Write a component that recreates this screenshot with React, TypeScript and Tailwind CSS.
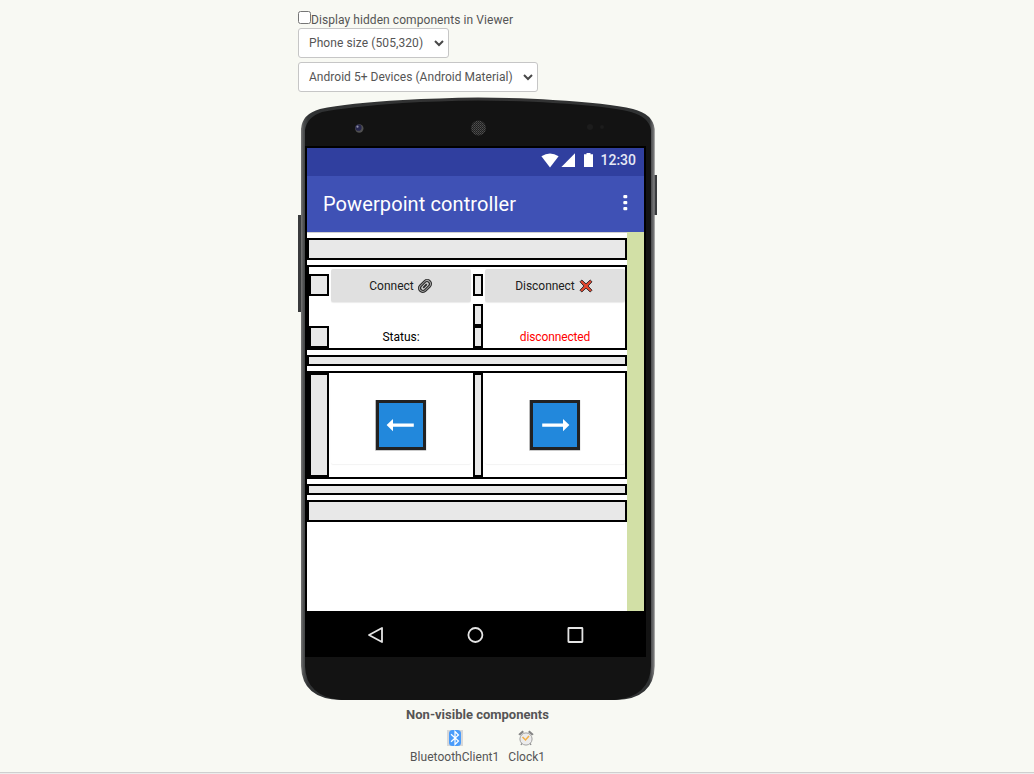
import React from "react";

const Spacer = ({ className }: { className: string }) => (
  <div className={`border-2 border-black bg-[#e8e8e8] ${className}`} />
);

const Select = ({ label, className }: { label: string; className: string }) => (
  <button className={`flex h-[30px] items-center justify-between rounded-[3px] border border-[#c6c6c6] bg-white pl-[10px] pr-[4px] text-[#555] ${className}`}>
    <span className="whitespace-nowrap">{label}</span>
    <svg width="10" height="8" viewBox="0 0 10 8" fill="none" stroke="#484848" strokeWidth="2">
      <path d="M1 2l4 4 4-4" />
    </svg>
  </button>
);

const Paperclip = () => (
  <svg width="16" height="16" viewBox="0 0 16 16" fill="none">
    <g transform="rotate(-45 8 8)">
      <rect x="0.6" y="3.7" width="14.8" height="8.6" rx="4.3" fill="#a4a4a4" stroke="#2a2a2a" strokeWidth="1.1" />
      <rect x="2.8" y="5.6" width="10.4" height="4.8" rx="2.4" fill="#d0d0d0" stroke="#2a2a2a" strokeWidth="1.1" />
      <path d="M5.5 8h5" stroke="#2a2a2a" strokeWidth="1.8" />
    </g>
  </svg>
);

const Cross = () => (
  <svg width="14" height="14" viewBox="0 0 14 14">
    <path d="M2.8 1 7 4.9 11.2 1 13 2.8 9.1 7 13 11.2 11.2 13 7 9.1 2.8 13 1 11.2 4.9 7 1 2.8Z" fill="#e0482f" stroke="#3a3030" strokeWidth="1" />
  </svg>
);

const Arrow = ({ flip }: { flip?: boolean }) => (
  <svg width="52" height="51" viewBox="0 0 52 51">
    <rect x="0.2" y="0" width="51" height="50.6" fill="#aaa" />
    <rect x="1" y="0" width="50" height="50" fill="#222" />
    <rect x="4" y="3" width="44" height="44" fill="#2288dc" />
    <path
      d="M11.6 25.1 18 19v4.5h20.8v3.2H18v4.5Z"
      fill="#fff"
      transform={flip ? "translate(52 0) scale(-1 1)" : undefined}
    />
  </svg>
);

const PhoneShell = () => (
  <svg className="absolute inset-0" width="360" height="604" viewBox="0 0 360 604">
    <defs>
      <linearGradient id="edge" x1="0" x2="1" y1="0" y2="0">
        <stop offset="0" stopColor="#747474" />
        <stop offset="0.008" stopColor="#4a4c4d" />
        <stop offset="0.02" stopColor="#303233" />
        <stop offset="0.5" stopColor="#333" />
        <stop offset="0.985" stopColor="#303233" />
        <stop offset="1" stopColor="#858585" />
      </linearGradient>
      <pattern id="grille" width="2" height="2" patternUnits="userSpaceOnUse">
        <rect width="2" height="2" fill="#202020" />
        <rect width="1" height="1" fill="#505050" />
        <rect x="1" y="1" width="1" height="1" fill="#404040" />
      </pattern>
    </defs>
    <rect x="0" y="118" width="5" height="97" fill="#393b3c" />
    <rect x="354" y="78" width="5" height="40" fill="#393b3c" />
    <path d="M3 32Q4 17 22 12Q50 6 105 3Q140 1 180 .5Q225 1 255 3Q310 6 335 12Q355 17 356.7 32V569Q356 602 318 603H43Q4 602 3 569Z" fill="url(#edge)" />
    <path d="M7 33Q9 20 24 15Q50 10 105 6Q140 4 180 3.5Q225 4 255 6Q310 9 333 15Q351 20 353 33V569Q352 600 316 603H44Q8 600 7 569Z" fill="#131313" />
    <circle cx="61.3" cy="31.5" r="4.2" fill="#505050" />
    <circle cx="60.5" cy="30.7" r="3.1" fill="#26264c" />
    <circle cx="59.5" cy="29.7" r="1.1" fill="#9090a8" />
    <circle cx="180.5" cy="31" r="7.5" fill="url(#grille)" />
    <circle cx="292" cy="30" r="3" fill="#1c1c1c" />
    <circle cx="304" cy="30" r="2" fill="#1c1c1c" />
  </svg>
);

const Bluetooth = () => (
  <svg width="16" height="16" viewBox="0 0 16 16">
    <rect width="16" height="16" fill="#d8d8d8" />
    <rect x="2" y="0" width="12" height="16" rx="3.5" fill="#4a9cfa" />
    <path d="M4 4.3 11.5 11 8 14.5v-13l3.5 3.5L4 11.7" fill="none" stroke="#fff" strokeWidth="1.2" />
  </svg>
);

const Clock = () => (
  <svg width="16" height="16" viewBox="0 0 16 16" className="mr-[2px]">
    <path d="M.3 4.2 4.5.5 6 2 2 5.5ZM15.7 4.2 11.5.5 10 2l4 3.5Z" fill="#858585" />
    <path d="m4 13-1 2m9-2 1 2" stroke="#888" strokeWidth="1.2" />
    <circle cx="8" cy="9" r="6.1" fill="#ececec" stroke="#a2a2a2" />
    <path d="M4.5 7 7.5 10 11 6" fill="none" stroke="#f2b04a" strokeWidth="1.5" />
  </svg>
);

const PhoneScreen = () => (
  <div className="relative flex h-[511px] w-[341px] flex-col border-x-2 border-t-2 border-black bg-black">
    <div className="flex h-7 shrink-0 items-center justify-end bg-[#303f9f] pr-[8px] text-white">
      <svg width="53" height="16" viewBox="0 0 53 16" fill="#fff" className="-mt-[5px]">
        <path d="M.4 4.2Q9 -1.3 17.6 4.2L9 15.4Z" />
        <path d="M34 1.3V15H20.4Z" />
        <path d="M43 2.3h2.5V1h4v1.3H52V15H43Z" />
      </svg>
      <span className="-mt-[5px] ml-[6px] text-[14px] font-medium leading-4 text-[#e6e8f5]">12:30</span>
    </div>
    <div className="flex h-14 shrink-0 items-center justify-between bg-[#3f51b5] pl-4 pr-[16px] text-white">
      <span className="text-[20px] leading-6 tracking-[0.1px]">Powerpoint controller</span>
      <svg width="5" height="16" viewBox="0 0 5 16" fill="#fff" className="-mt-[3px]">
        <rect x=".3" y="0" width="4" height="3.3" rx="1" />
        <rect x=".3" y="6" width="4" height="3.3" rx="1" />
        <rect x=".3" y="12" width="4" height="3.3" rx="1" />
      </svg>
    </div>
    <div className="flex h-[379px] shrink-0 bg-[#d2e0a6]">
      <div className="flex w-80 flex-col gap-[5px] border-t border-[#d0d0d0] bg-white pt-[5px]">
        <Spacer className="h-[22px] shrink-0" />
        <div className="grid h-[85px] shrink-0 grid-cols-[20px_144px_10px_142px] border-2 border-black">
          <div className="flex flex-col pt-[7px]">
            <Spacer className="h-[22px]" />
            <Spacer className="mt-[30px] h-[22px]" />
          </div>
          <div className="flex flex-col px-[2px] pt-[2px]">
            <button className="flex h-[33px] items-center justify-center gap-[3px] rounded-[2px] bg-[#e0e0e0] text-[#212121] shadow-[0_1px_1px_rgba(0,0,0,0.08)]">
              Connect <Paperclip />
            </button>
            <span className="mt-[26px] text-center leading-[18px] text-black">Status:</span>
          </div>
          <div className="flex flex-col pt-[7px]">
            <Spacer className="h-[22px]" />
            <Spacer className="mt-[8px] h-[22px]" />
            <Spacer className="h-[22px]" />
          </div>
          <div className="flex flex-col pl-[2px] pt-[2px]">
            <button className="flex h-[33px] items-center justify-center gap-1 rounded-[2px] bg-[#e0e0e0] pr-[2px] text-[#212121] shadow-[0_1px_1px_rgba(0,0,0,0.08)]">
              <span className="tracking-[-0.05px]">Disconnect</span> <Cross />
            </button>
            <span className="mt-[26px] text-center leading-[18px] tracking-[-0.12px] text-[#f00]">disconnected</span>
          </div>
        </div>
        <Spacer className="h-[11px] shrink-0" />
        <div className="grid h-[108px] shrink-0 grid-cols-[20px_144px_10px_142px] border-2 border-black">
          <Spacer className="h-[104px]" />
          <div className="px-[2px] pt-[12px]">
            <div className="flex h-[79px] justify-center rounded-[2px] bg-white pt-[15px] shadow-[0_1px_1px_rgba(0,0,0,0.05)]">
              <Arrow />
            </div>
          </div>
          <Spacer className="h-[104px]" />
          <div className="pl-[2px] pt-[12px]">
            <div className="flex h-[79px] justify-center rounded-[2px] bg-white pt-[15px] shadow-[0_1px_1px_rgba(0,0,0,0.05)]">
              <Arrow flip />
            </div>
          </div>
        </div>
        <Spacer className="h-[11px] shrink-0" />
        <Spacer className="h-[22px] shrink-0" />
      </div>
    </div>
    <div className="flex h-[46px] items-center justify-center">
      <svg width="220" height="20" viewBox="0 0 220 20" fill="none" stroke="#e4e4e4" strokeWidth="1.8">
        <path d="M16 4v14L3 11Z" strokeLinejoin="round" />
        <circle cx="109.4" cy="11" r="7" />
        <rect x="202.4" y="4" width="14" height="14" rx="0.5" />
      </svg>
    </div>
  </div>
);

export default function App() {
  return (
    <div className="flex h-[774px] w-[1034px] flex-col overflow-hidden bg-[#f8f9f3] font-['Roboto',sans-serif] text-[12px] text-[#555]">
      <div className="ml-[298px] flex w-[360px] grow flex-col self-start">
        <label className="flex h-[28px] shrink-0 pt-[11px]">
          <span className="h-[13px] w-[13px] rounded-[2.5px] border border-[#767676] bg-white" />
          <span className="pt-px leading-[17px] tracking-[0.07px]">Display hidden components in Viewer</span>
        </label>
        <Select className="w-[151px] shrink-0 tracking-[0.09px]" label="Phone size (505,320)" />
        <Select className="mt-1 w-[240px] shrink-0 tracking-[0.03px]" label="Android 5+ Devices (Android Material)" />
        <div className="relative mt-[5px] h-[604px] shrink-0 pl-[7px] pt-[49px]">
          <PhoneShell />
          <PhoneScreen />
        </div>
        <div className="mt-[6px] h-[18px] pr-[1px] text-center text-[13px] font-bold leading-[16px]">Non-visible components</div>
        <div className="mt-[5px] flex gap-[9px] pl-[112px]">
          <div className="flex flex-col items-center"><Bluetooth /><span className="mt-[2px] leading-[18px] tracking-[0.04px]">BluetoothClient1</span></div>
          <div className="flex flex-col items-center"><Clock /><span className="mt-[2px] leading-[18px]">Clock1</span></div>
        </div>
      </div>
      <div className="h-[2px] shrink-0 border-t border-[#cfcfcf] bg-[#ececec]" />
    </div>
  );
}
